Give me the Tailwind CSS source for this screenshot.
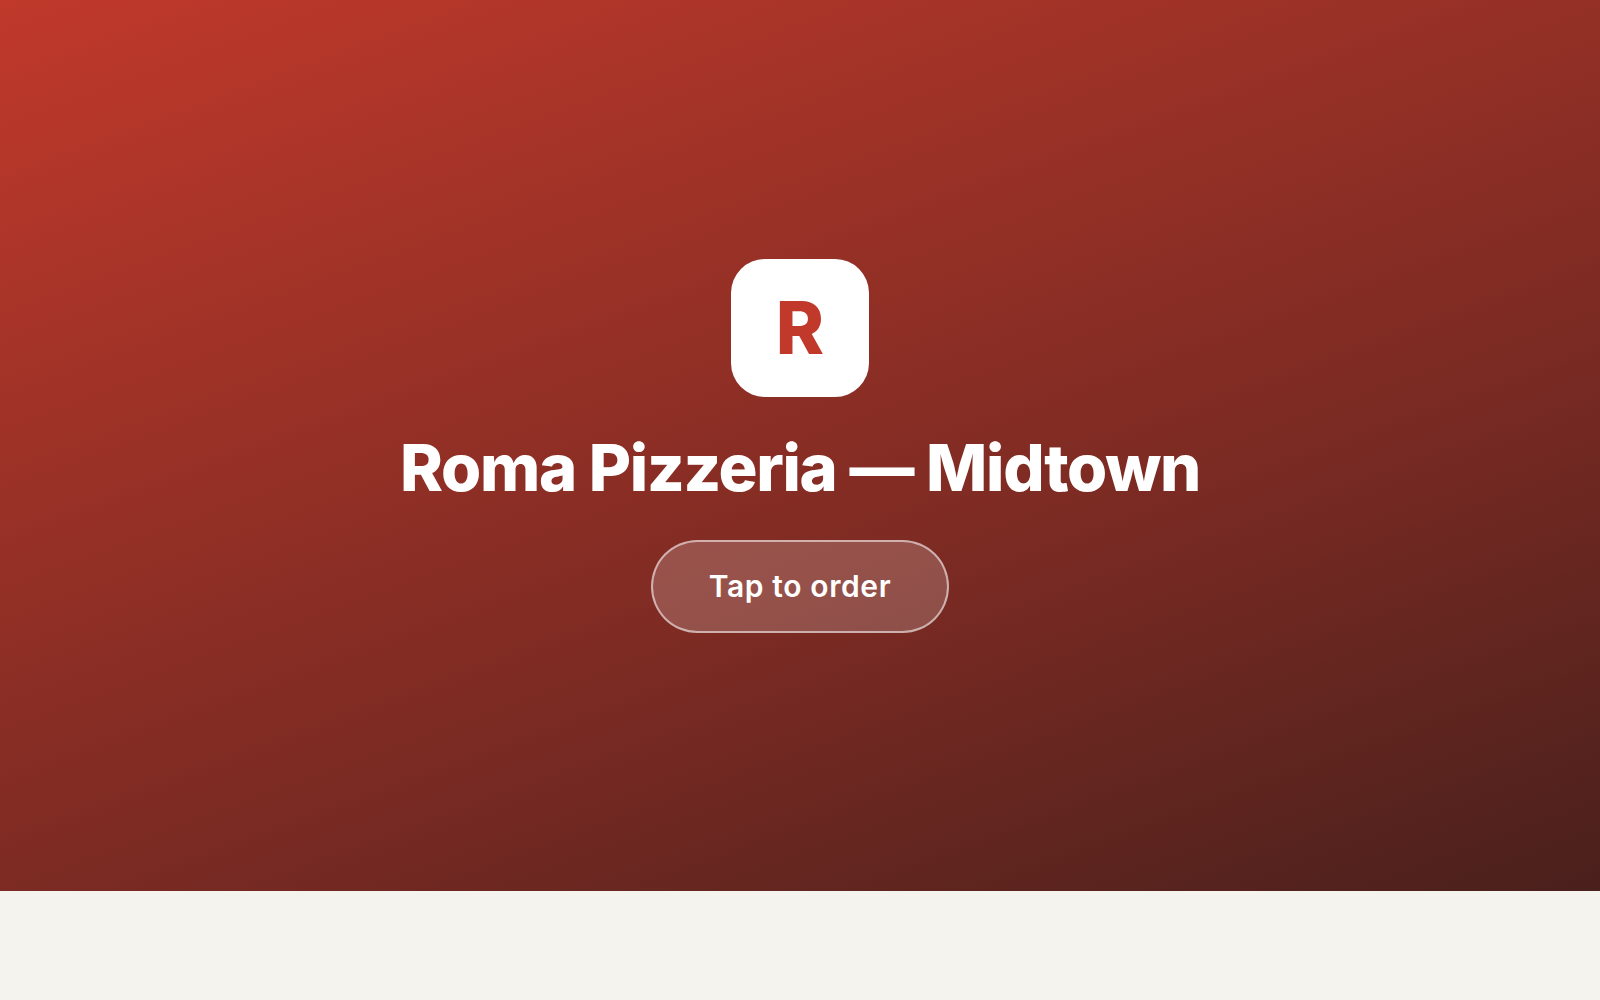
<!DOCTYPE html>
<html lang="en">
  <head>
    <meta charset="UTF-8" />
    <meta name="viewport" content="width=device-width, initial-scale=1.0" />
    <title>Roma Pizzeria — Midtown</title>
    <script src="https://cdn.jsdelivr.net/npm/@tailwindcss/browser@4"></script>
  </head>
  <body class="h-screen overflow-hidden bg-[#f4f3ee] font-['Inter',sans-serif]">
    <main
      class="flex h-[891px] flex-col items-center justify-center bg-[linear-gradient(160deg,#c0392b_0%,#7d2b23_60%,#4a201c_100%)] text-white"
    >
      <div
        class="flex size-[138px] items-center justify-center rounded-[34px] bg-white pt-px text-[73px] font-extrabold text-[#c0392b]"
      >
        R
      </div>
      <h1
        class="mt-[33px] text-[65px] leading-[76px] font-extrabold tracking-[-1.3px] whitespace-nowrap"
      >
        Roma Pizzeria — Midtown
      </h1>
      <button
        class="mt-[34px] h-[93px] w-[298px] rounded-full border-2 border-white/55 bg-white/18 text-[30px] font-semibold tracking-[0.6px]"
      >
        Tap to order
      </button>
    </main>
  </body>
</html>
